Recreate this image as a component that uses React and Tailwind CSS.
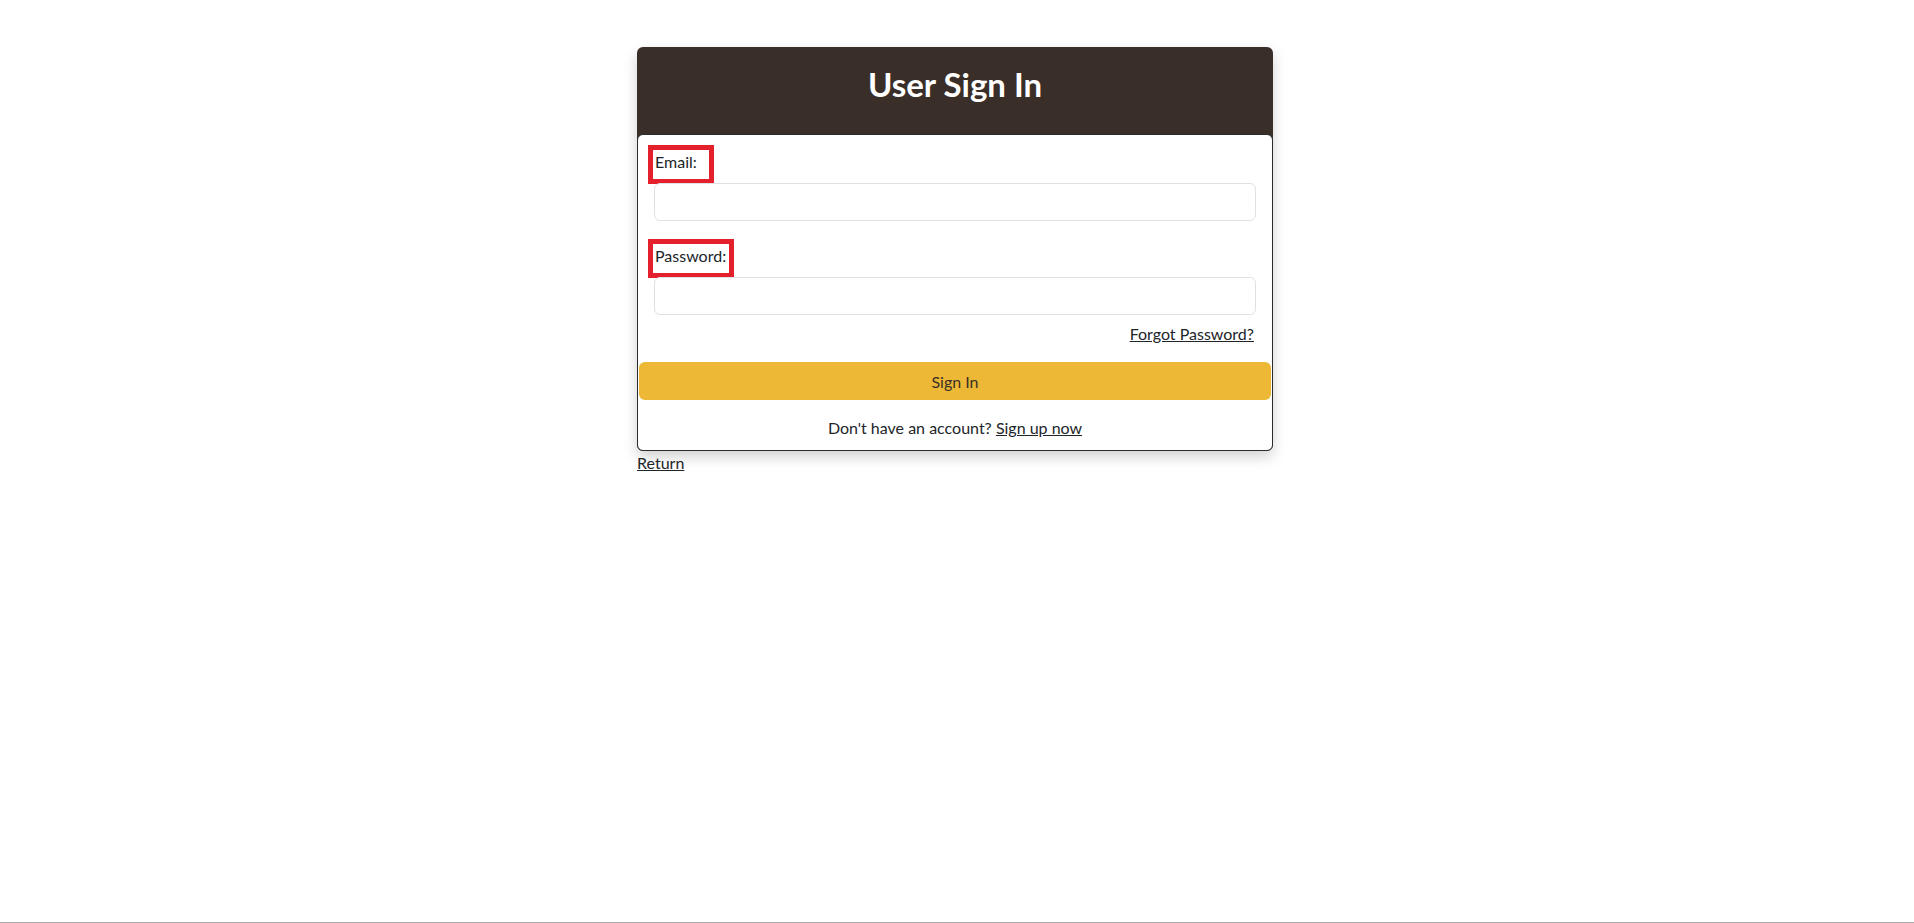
import React from 'react';

const font = { fontFamily: 'Lato, "Noto Sans", sans-serif' };

const Field = ({ label, type, boxWidth }) => {
  return (
    <div className="flex flex-col">
      <label className={`-ml-[6px] flex items-center h-[39px] border-[5px] border-[#e3202b] pl-[2px] pb-[5px] text-[16px] text-[#212529] ${boxWidth}`}>
        {label}
      </label>
      <input
        type={type}
        className="-mt-px h-[38px] w-full rounded-[6px] border border-[#dee2e6] bg-white px-3 outline-none"
      />
    </div>
  );
};

const App = () => {
  return (
    <div className="min-h-screen bg-white border-b border-[#ababab]" style={font}>
      <div className="flex justify-center pt-[47px] pr-[4px]">
        <div className="flex flex-col">
          <div className="w-[636px] rounded-[6px] bg-[#3a2e29] shadow-[0_6px_14px_rgba(0,0,0,0.18)]">
            <div className="h-[87px] pt-[18px] text-center">
              <h2 className="text-[33px] font-bold leading-[38px] text-white">User Sign In</h2>
            </div>

            <div className="rounded-[6px] border border-[#2b2b2b] bg-white px-[16px] pt-[10px] pb-[10px]">
              <Field label="Email:" type="email" boxWidth="w-[66px]" />
              <div className="mt-[18px]">
                <Field label="Password:" type="password" boxWidth="w-[86px]" />
              </div>

              <div className="mt-[7px] pr-[2px] text-right text-[16px] leading-6 text-[#212529]">
                <a href="#" className="underline">Forgot Password?</a>
              </div>

              <button className="mt-[16px] -mx-[15px] h-[38px] w-[calc(100%+30px)] rounded-[6px] bg-[#edb835] pt-px text-[16px] text-[#3a3027]">
                Sign In
              </button>

              <p className="mt-[16px] text-center text-[16px] leading-6 text-[#212529]">
                Don't have an account? <a href="#" className="underline">Sign up now</a>
              </p>
            </div>
          </div>

          <a href="#" className="self-start text-[16px] leading-6 text-[#212529] underline">Return</a>
        </div>
      </div>
    </div>
  );
};

export default App;
